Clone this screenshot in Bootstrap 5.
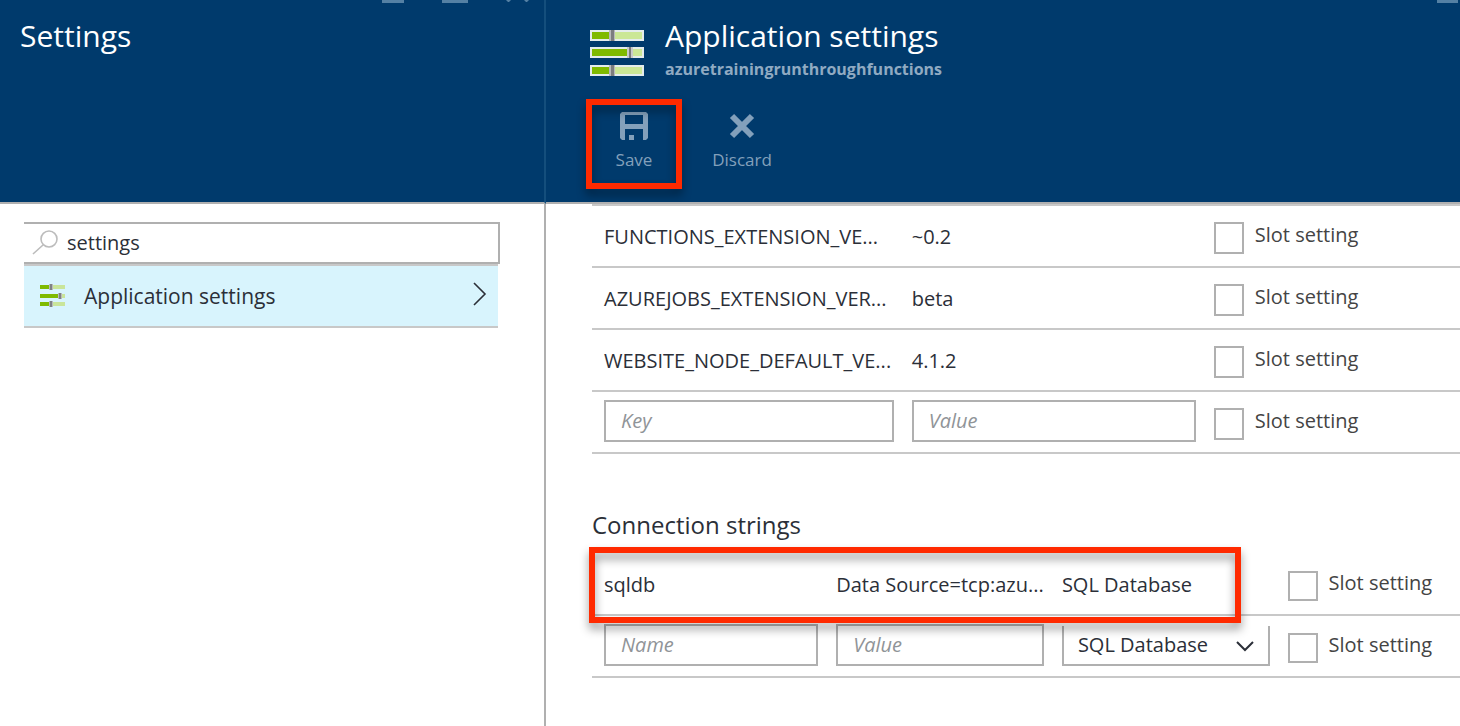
<!DOCTYPE html>
<html lang="en">
<head>
<meta charset="utf-8">
<meta name="viewport" content="width=device-width, initial-scale=1">
<title>Application settings</title>
<link href="https://cdn.jsdelivr.net/npm/bootstrap@5.3.0/dist/css/bootstrap.min.css" rel="stylesheet">
<style>
body{font-family:"Open Sans","Noto Sans",sans-serif;font-size:20px;line-height:28px;color:#2b2f38;background:#fff}
.blades{display:grid;grid-template-columns:minmax(0,273fr) minmax(0,457fr)}
.blade-first{border-right:2px solid #b0b0b0}
.blade-head{height:204px;background:#003a6c;border-bottom:2px solid #b0b0b0;color:#fff}
.blade-first .blade-head{margin-right:-2px;border-right:2px solid #144e7c}
.blade-title{font-size:30px;line-height:40px;font-weight:400;white-space:nowrap}
.blade-sub{font-size:16px;line-height:26px;font-weight:700;color:#90aac2}
.win-tools{top:0;right:6px;color:#5480a4}
.win-tools-last{right:2px}
.head-line{padding:16px 0 0 44px;gap:21px}
.head-icon{margin-top:13px}
.tools{padding-left:40px;margin-top:17px;gap:12px}
.tool{width:96px;height:90px;padding-top:13px;gap:8px;background:none;border:0;color:#83a0bb;font-size:17px;line-height:24px}
.callout{border:6px solid #ff2a00;filter:drop-shadow(0 6px 5px rgba(0,0,0,.4));pointer-events:none}
.save-mark{inset:0}
.row-mark{top:-7px;left:-3px;width:75.1%;height:76px}
.blade-body{padding:18px 44px 0 24px}
.search-box{height:42px;border:2px solid #b0b0b0;border-left:0}
.search-box input,.fld{border-radius:0;font-size:20px;color:#2b2f38;outline:0}
.search-box input{border:0;background:none;padding:0}
.set-item{height:64px;margin-right:2px;background:#d8f4fd;border-top:2px solid #c8c8c8;border-bottom:2px solid #c8c8c8;color:#2b2f38;text-decoration:none;font-size:21px}
.set-label{margin-left:18px}
.sheets{padding-left:46px}
.sheet{width:100%;table-layout:fixed;border-collapse:separate;border-spacing:0}
.sheet td{height:62px;padding:2px 9px 0;border-bottom:2px solid #c8c8c8;white-space:nowrap}
.sheet td:first-child{padding-left:12px}
.sheet-top{border-top:2px solid #c8c8c8}
.fld{display:block;width:100%;height:42px;margin-bottom:4px;padding:0 15px 2px;border:2px solid #b0b0b0;background:#fff}
.fld::placeholder{color:#909498;font-style:italic;opacity:1}
select.fld{appearance:none;height:40px;margin-bottom:2px;padding:0 14px;border-top:0}
.select-wrap svg{right:16px;top:14px;pointer-events:none}
.slot{color:#444;gap:11px}
.slot input{appearance:none;flex:none;width:30px;height:32px;margin:2px 0 0;border:2px solid #b0b0b0;background:#fff}
.slot-square input{height:30px}
.slot span{margin-bottom:4px}
.sect{font-size:24px;line-height:30px;font-weight:400;margin:56px 0 14px}
.c36{width:35.8%}.c35{width:34.8%}.c27{width:27.1%}.c26{width:26%}
</style>
</head>
<body>
<svg class="d-none" aria-hidden="true">
<symbol id="sliders" viewBox="0 0 54 48">
<g id="bar-a"><path fill="#e4ecec" d="M0 1h54v11H0z"/><path fill="#cbe796" d="M25 3h27v7H25z"/><path fill="#7fba00" d="M2 3h18v7H2z"/><path fill="#b8baba" d="M19 1h6v11h-6z"/><path fill="#7c7d7f" d="M21 1h3v11h-3z"/></g>
<path fill="#e4ecec" d="M0 18h54v11H0z"/><path fill="#cbe796" d="M42 20h10v7H42z"/><path fill="#7fba00" d="M2 20h35v7H2z"/><path fill="#c8caca" d="M37 18h6v11h-6z"/><path fill="#7a7a7a" d="M39 18h2v11h-2z"/>
<use href="#bar-a" y="35"/>
</symbol>
<symbol id="sliders-small" viewBox="0 0 26 24">
<path fill="#c9e59a" d="M0 1h25v4H0zM0 10h25v4H0zM0 18h25v4H0z"/><path fill="#7fba00" d="M0 1h10v4H0zM0 10h18v4H0zM0 18h10v4H0z"/><path fill="#b9bcbc" d="M9 0h4v6H9zM18 9h4v6h-4zM9 17h4v6H9z"/><path fill="#808285" d="M10 0h2v6h-2zM19 9h2v6h-2zM10 17h2v6h-2z"/>
</symbol>
</svg>
<div class="blades min-vh-100">
<section class="blade-first">
<header class="blade-head position-relative overflow-hidden">
<svg class="win-tools position-absolute" width="156" height="3" fill="currentColor" aria-hidden="true"><path d="M0 0h22v3H0zM60 0h26v3H60zM124 0h5l-2 2h-1zM142 0h5l-2 2h-1z"/></svg>
<h1 class="blade-title mb-0 ps-3 pt-3 ms-1">Settings</h1>
</header>
<div class="blade-body">
<div class="search-box d-flex align-items-center">
<svg class="flex-shrink-0 ms-2" width="27" height="28" fill="none" stroke="#bcbcbc" stroke-width="1.6" aria-hidden="true"><circle cx="17" cy="10" r="8"/><path d="M11 16L1 25"/></svg>
<input class="flex-grow-1 ms-2" type="text" aria-label="Filter settings" value="settings">
</div>
<a class="set-item d-flex align-items-center ps-3 pe-2" href="#app">
<svg width="26" height="24" aria-hidden="true"><use href="#sliders-small"/></svg>
<span class="set-label flex-grow-1">Application settings</span>
<svg class="mb-1" width="20" height="28" fill="none" stroke="#2b2f38" stroke-width="1.6" aria-hidden="true"><path d="M4 3l11 11L4 25"/></svg>
</a>
</div>
</section>
<section id="app">
<header class="blade-head position-relative overflow-hidden">
<svg class="win-tools win-tools-last position-absolute" width="21" height="3" fill="currentColor" aria-hidden="true"><path d="M0 0h21v3H0z"/></svg>
<div class="head-line d-flex">
<svg class="head-icon" width="54" height="48" aria-hidden="true"><use href="#sliders"/></svg>
<div><h2 class="blade-title mb-0">Application settings</h2><div class="blade-sub">azuretrainingrunthroughfunctions</div></div>
</div>
<div class="d-flex tools">
<div class="position-relative">
<button class="tool d-flex flex-column align-items-center" type="button"><svg width="28" height="28" fill="currentColor" aria-hidden="true"><path fill-rule="evenodd" d="M2 0h24l2 2v24l-2 2h-3V17H5v11H2l-2-2V2zM5 3v9h18V3zM9 23h5v5H9z"/></svg>Save</button>
<div class="callout save-mark position-absolute"></div>
</div>
<button class="tool d-flex flex-column align-items-center" type="button"><svg width="28" height="28" fill="none" stroke="currentColor" stroke-width="6" aria-hidden="true"><path d="M4 4l20 20M24 4L4 24"/></svg>Discard</button>
</div>
</header>
<div class="sheets">
<table class="sheet sheet-top">
<colgroup><col class="c36"><col class="c35"><col></colgroup>
<tbody>
<tr><td>FUNCTIONS_EXTENSION_VE...</td><td>~0.2</td><td><label class="slot d-flex align-items-center"><input type="checkbox"><span>Slot setting</span></label></td></tr>
<tr><td>AZUREJOBS_EXTENSION_VER...</td><td>beta</td><td><label class="slot d-flex align-items-center"><input type="checkbox"><span>Slot setting</span></label></td></tr>
<tr><td>WEBSITE_NODE_DEFAULT_VE...</td><td>4.1.2</td><td><label class="slot d-flex align-items-center"><input type="checkbox"><span>Slot setting</span></label></td></tr>
<tr><td><input class="fld" type="text" placeholder="Key" aria-label="Key"></td><td><input class="fld" type="text" placeholder="Value" aria-label="Value"></td><td><label class="slot d-flex align-items-center"><input type="checkbox"><span>Slot setting</span></label></td></tr>
</tbody>
</table>
<h3 class="sect">Connection strings</h3>
<div class="position-relative">
<table class="sheet">
<colgroup><col class="c27"><col class="c26"><col class="c26"><col></colgroup>
<tbody>
<tr><td>sqldb</td><td>Data Source=tcp:azu...</td><td>SQL Database</td><td><label class="slot slot-square d-flex align-items-center"><input type="checkbox"><span>Slot setting</span></label></td></tr>
<tr><td><input class="fld" type="text" placeholder="Name" aria-label="Name"></td><td><input class="fld" type="text" placeholder="Value" aria-label="Connection value"></td><td><div class="select-wrap position-relative"><select class="fld" aria-label="Database type"><option>SQL Database</option></select><svg class="position-absolute" width="18" height="12" fill="none" stroke="#2b2f38" stroke-width="2" aria-hidden="true"><path d="M1 2l8 8 8-8"/></svg></div></td><td><label class="slot slot-square d-flex align-items-center"><input type="checkbox"><span>Slot setting</span></label></td></tr>
</tbody>
</table>
<div class="callout row-mark position-absolute"></div>
</div>
</div>
</section>
</div>
<script src="https://cdn.jsdelivr.net/npm/bootstrap@5.3.0/dist/js/bootstrap.bundle.min.js"></script>
</body>
</html>
